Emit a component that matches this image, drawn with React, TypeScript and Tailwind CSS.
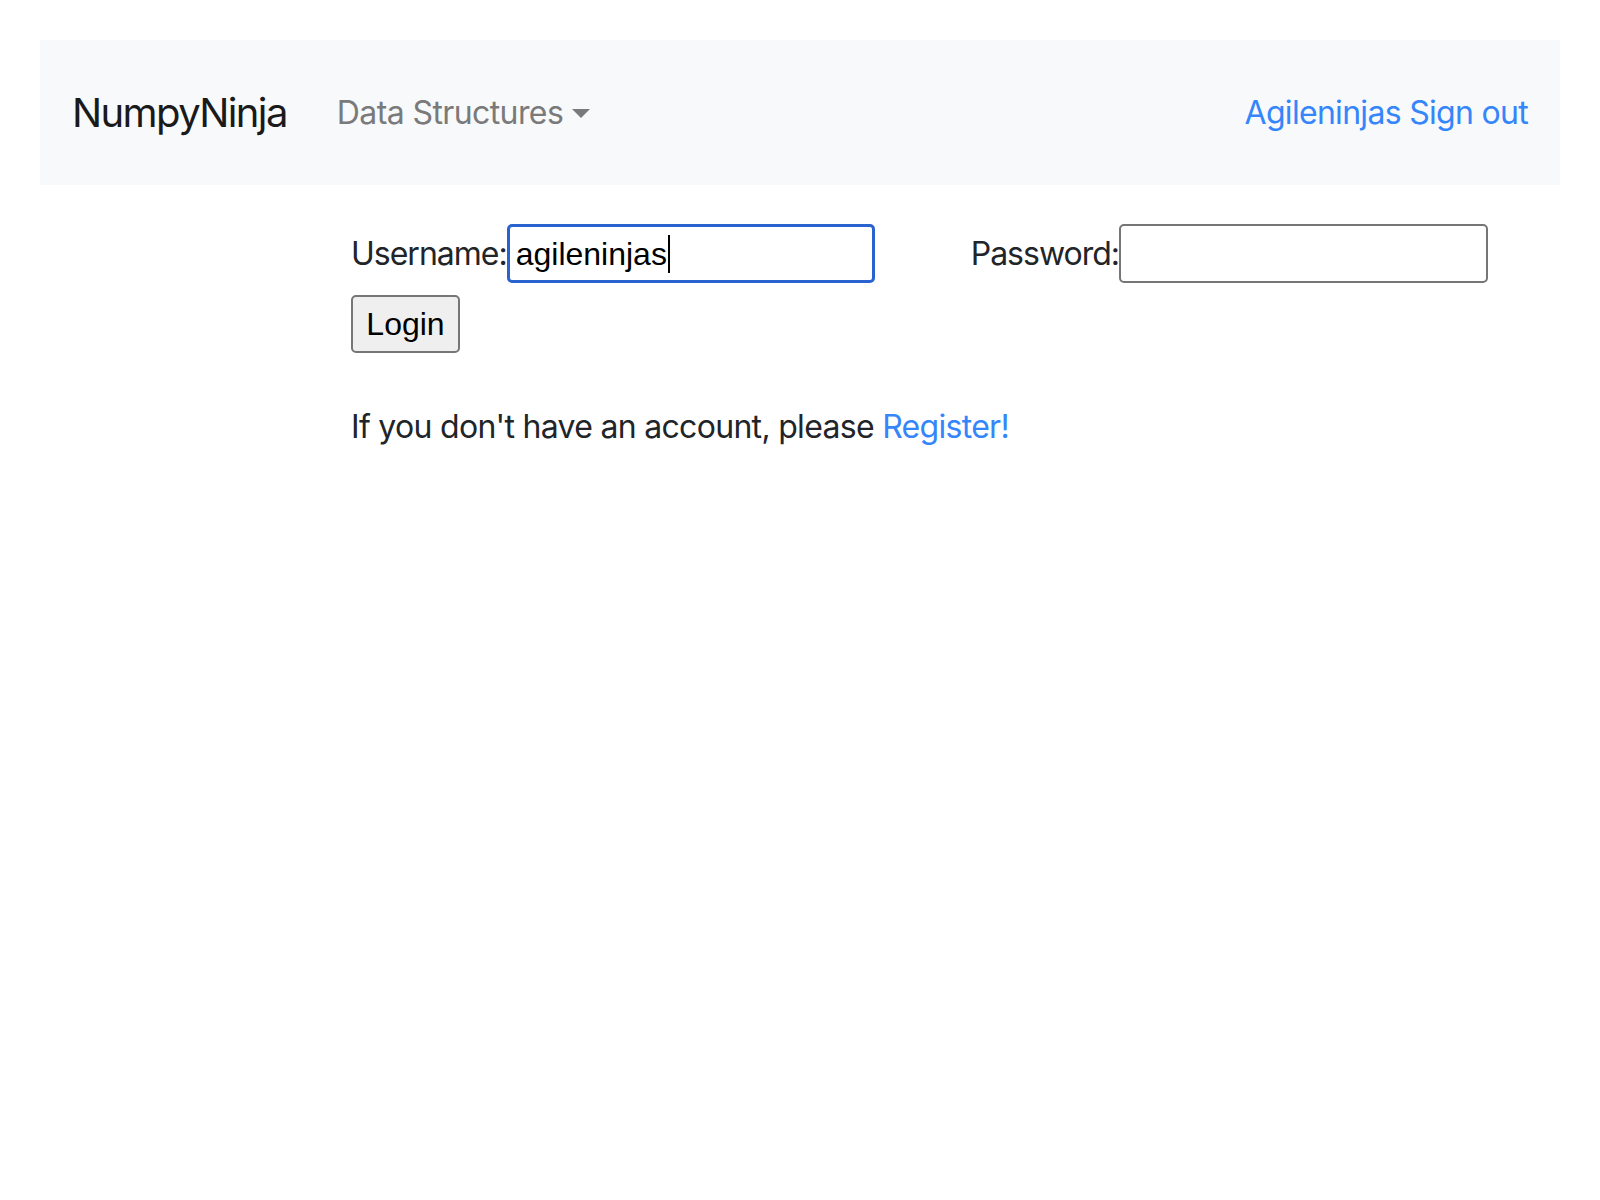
import React from 'react';

export default function App() {
  return (
    <div className="min-h-[1200px] bg-white px-[40px] pt-[40px] font-['Inter',sans-serif] text-[#212529]">
      {/* Navbar */}
      <nav className="flex h-[145px] items-center justify-between bg-[#f8f9fa] pl-[32px] pr-[32px]">
        <div className="flex items-center">
          <a className="text-[40px] leading-none tracking-[-1.6px] text-[#1a1a1a]">NumpyNinja</a>
          <a className="ml-[50px] flex items-center text-[32px] leading-none tracking-[-0.6px] text-[#7a7a7a]">
            Data Structures
            <span className="ml-[9px] mt-[2px] inline-block h-0 w-0 border-x-[9px] border-t-[9px] border-x-transparent border-t-[#7a7a7a]" />
          </a>
        </div>
        <div className="text-[32px] leading-none tracking-[-0.7px] text-[#3585fb]">
          <a>Agileninjas</a> <a>Sign out</a>
        </div>
      </nav>

      {/* Login form */}
      <div className="pl-[311px] pt-[39px]">
        <div className="flex items-center">
          <label className="text-[32px] leading-none tracking-[-1px]">Username:</label>
          <div className="flex h-[59px] w-[368px] items-center rounded-[5px] border-[3px] border-[#2a62d0] pl-[6px] font-['Liberation_Sans',Arial,sans-serif] text-[32px] text-black">
            agileninjas
            <span className="ml-[1px] inline-block h-[38px] w-[2px] bg-black" />
          </div>
          <label className="ml-[96px] text-[32px] leading-none tracking-[-1px]">Password:</label>
          <div className="h-[59px] w-[369px] rounded-[5px] border-2 border-[#767676] bg-white" />
        </div>
        <button className="mt-[12px] h-[58px] w-[109px] rounded-[5px] border-2 border-[#767676] bg-[#efefef] font-['Liberation_Sans',Arial,sans-serif] text-[32px] text-black">
          Login
        </button>
        <p className="mt-[50px] text-[32px] leading-[48px] tracking-[-0.7px]">
          If you don't have an account, please <a className="text-[#3585fb]">Register!</a>
        </p>
      </div>
    </div>
  );
}
